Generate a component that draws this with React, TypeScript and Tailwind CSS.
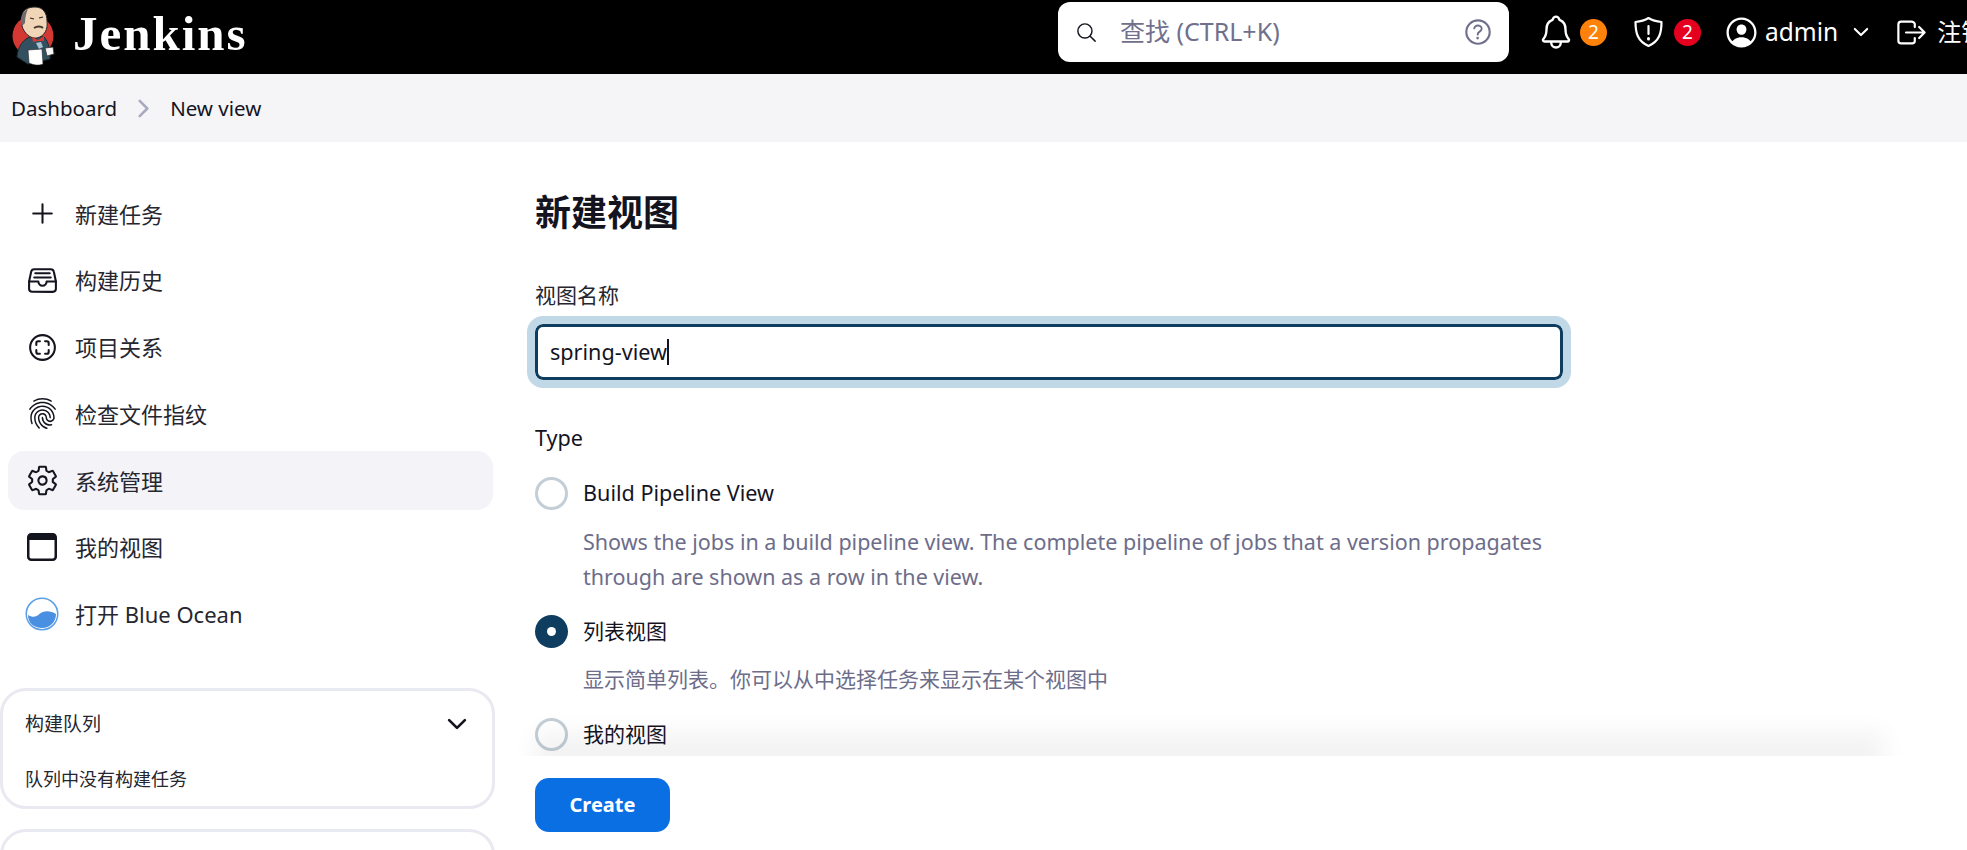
import React from "react";
import {
  IoAdd,
  IoFileTrayFullOutline,
  IoScanCircleOutline,
  IoFingerPrintOutline,
  IoSettingsOutline,
  IoNotificationsOutline,
  IoPersonCircleOutline,
  IoLogOutOutline,
  IoSearchOutline,
  IoHelpCircleOutline,
  IoChevronDown,
  IoChevronForward,
} from "react-icons/io5";

const FONT = "font-['Noto_Sans','Noto_Sans_CJK_SC',sans-serif]";

function Logo() {
  return (
    <svg width="60" height="66" viewBox="0 0 60 66" className="shrink-0">
      <circle cx="23" cy="32" r="20.5" fill="#d33833" />
      <path d="M7 53 C8 42 13 35 22 32 L34 33 C39 38 40 46 40 55 L18 60 Z" fill="#335061" stroke="#1c2b36" strokeWidth="1" />
      <path d="M12 13 C12 6 18 3 25 3 C33 3 37 9 37 17 C38 25 35 32 27 34 C20 35 14 29 12 22 Z" fill="#f0d6b7" stroke="#2a2a2a" strokeWidth="1" />
      <path d="M12 22 C9 15 12 8 18 5 C16 9 15 14 15 19 Z" fill="#6d6b6d" />
      <path d="M24 24 C27 22 31 22 33 24" stroke="#49372c" strokeWidth="2" fill="none" />
      <path d="M20 14 L24 15 M29 14 L33 13" stroke="#2a2a2a" strokeWidth="1.2" />
      <path d="M22 33 L28 36 L34 32 L34 37 L28 37 L23 38 Z" fill="#d33833" />
      <path d="M26 39 L31 38 L33 43 L29 45 Z" fill="#a9c3d2" />
      <path d="M18 46 L32 45 L33 60 C29 62 23 61 19 59 Z" fill="#ffffff" stroke="#222" strokeWidth="0.6" />
      <path d="M35 44 L43 43 L44 50 L37 52 Z" fill="#f5f5f5" stroke="#333" strokeWidth="0.8" />
    </svg>
  );
}

function ShieldIcon() {
  return (
    <svg width="31" height="32" viewBox="0 0 30 32" fill="none" stroke="#fff" strokeWidth="2.2" strokeLinejoin="round" strokeLinecap="round">
      <path d="M15 2 C19 4.5 23 5.5 28 6 C28 17 26 25 15 30 C4 25 2 17 2 6 C7 5.5 11 4.5 15 2 Z" />
      <path d="M15 10 L15 18" />
      <path d="M15 22.5 L15 23" strokeWidth="3" />
    </svg>
  );
}

function WindowIcon() {
  return (
    <svg width="30" height="28" viewBox="0 0 30 28">
      <rect x="1.25" y="1.25" width="27.5" height="25.5" rx="3" fill="none" stroke="#14141f" strokeWidth="2.5" />
      <path d="M1 4 a3 3 0 0 1 3-3 h22 a3 3 0 0 1 3 3 v3 H1 Z" fill="#14141f" />
    </svg>
  );
}

function OceanIcon() {
  return (
    <svg width="34" height="34" viewBox="0 0 34 34">
      <circle cx="17" cy="17" r="15.75" fill="#fff" stroke="#5a9fe6" strokeWidth="1.5" />
      <path d="M3 18 C8 21 11 20 15 16.5 C20 13 26 14 31 17 C31 25 25 31 17 31 C9 31 3 26 3 18 Z" fill="#4a90e2" />
    </svg>
  );
}

function NavItem({ icon, label, active }: { icon: React.ReactNode; label: string; active?: boolean }) {
  return (
    <div className={`h-[59px] mb-[7.8px] flex items-center rounded-[16px] pl-[16px] ${active ? "bg-[#f3f3f8]" : ""}`}>
      <span className="w-[36px] flex items-center justify-center shrink-0 text-[#14141f]">{icon}</span>
      <span className="ml-[15px] text-[22px] leading-none text-[#26262f] whitespace-nowrap">{label}</span>
    </div>
  );
}

function Radio({ checked }: { checked?: boolean }) {
  return checked ? (
    <span className="w-[33px] h-[33px] rounded-full bg-[#0e3d60] flex items-center justify-center shrink-0">
      <span className="w-[9px] h-[9px] rounded-full bg-white" />
    </span>
  ) : (
    <span className="w-[33px] h-[33px] rounded-full border-[3px] border-[#c3ced6] bg-white shrink-0" />
  );
}

export default function App() {
  return (
    <div className={`w-[1967px] h-[850px] overflow-hidden bg-white relative ${FONT}`}>
      {/* Header */}
      <header className="h-[74px] bg-black flex items-center pl-[10px] overflow-hidden">
        <div className="w-[1048px] flex items-center shrink-0">
          <Logo />
          <span className="ml-[3px] font-['Liberation_Serif',serif] font-bold text-[49px] tracking-[2px] text-white leading-none -mt-[8px]">
            Jenkins
          </span>
        </div>
        <div className="w-[451px] h-[60px] -mt-[10px] bg-white rounded-[12px] flex items-center shrink-0 pl-[17px] pr-[14px]">
          <IoSearchOutline size={23} className="text-[#14141f] shrink-0" />
          <span className="ml-[22px] text-[25px] text-[#70708c] whitespace-nowrap">查找 (CTRL+K)</span>
          <IoHelpCircleOutline size={34} className="ml-auto text-[#70708c]" />
        </div>
        <div className="ml-[28px] flex items-center text-white -mt-[10px] shrink-0">
          <IoNotificationsOutline size={38} />
          <span className="ml-[5px] w-[27px] h-[27px] rounded-full bg-[#fe820a] text-[19px] flex items-center justify-center">2</span>
          <span className="ml-[26px]"><ShieldIcon /></span>
          <span className="ml-[10px] w-[27px] h-[27px] rounded-full bg-[#e6001f] text-[19px] flex items-center justify-center">2</span>
          <IoPersonCircleOutline size={37} className="ml-[22px]" />
          <span className="ml-[5px] text-[24.5px] leading-none whitespace-nowrap">admin</span>
          <IoChevronDown size={22} className="ml-[12px]" />
          <IoLogOutOutline size={35} className="ml-[22px]" />
          <span className="ml-[8px] text-[24px] leading-none whitespace-nowrap">注销</span>
        </div>
      </header>

      {/* Breadcrumb */}
      <div className="h-[68px] bg-[#f5f5f8] flex items-center pl-[11px] text-[20.5px] text-[#14141f]">
        <span>Dashboard</span>
        <IoChevronForward size={27} className="ml-[13px] text-[#a8a8c0]" />
        <span className="ml-[13px]">New view</span>
      </div>

      <div className="flex">
        {/* Sidebar */}
        <aside className="w-[501px] pl-[8px] pr-[8px] pt-[42px] shrink-0">
          <NavItem icon={<IoAdd size={33} />} label="新建任务" />
          <NavItem icon={<IoFileTrayFullOutline size={33} />} label="构建历史" />
          <NavItem icon={<IoScanCircleOutline size={33} />} label="项目关系" />
          <NavItem icon={<IoFingerPrintOutline size={33} />} label="检查文件指纹" />
          <NavItem active icon={<IoSettingsOutline size={33} />} label="系统管理" />
          <NavItem icon={<WindowIcon />} label="我的视图" />
          <NavItem icon={<OceanIcon />} label="打开 Blue Ocean" />
          <div className="-ml-[8px] -mr-[2px] mt-[44px] h-[121px] border-[3px] border-[#e9e9f2] rounded-[26px] pl-[22px] pr-[21px] text-[#26262f]">
            <div className="flex items-center justify-between pt-[19px]">
              <span className="text-[19px] leading-[28px]">构建队列</span>
              <IoChevronDown size={28} className="text-[#14141f]" />
            </div>
            <div className="mt-[28px] text-[18px] leading-[26px]">队列中没有构建任务</div>
          </div>
          <div className="-ml-[8px] -mr-[2px] mt-[20px] h-[60px] border-[3px] border-[#e9e9f2] rounded-[26px]" />
        </aside>

        {/* Main */}
        <main className="pl-[34px] w-[1062px] shrink-0 text-[#14141f]">
          <h1 className="mt-[46px] text-[36px] leading-[50px] font-bold">新建视图</h1>
          <label className="block mt-[42px] text-[21px] leading-[30px] text-[#26262f]">视图名称</label>
          <div className="mt-[14px] h-[56px] rounded-[8px] border-[3px] border-[#0e3d60] outline-[8px] outline-[#c1d8e7] flex items-center pl-[12px] text-[21.6px]">
            <span>spring-view</span>
            <span className="w-[2px] h-[26px] bg-[#14141f]" />
          </div>
          <div className="mt-[44px] text-[21.6px] leading-[28px]">Type</div>

          <div className="mt-[25px] flex items-center">
            <Radio />
            <span className="ml-[15px] text-[21.6px]">Build Pipeline View</span>
          </div>
          <p className="mt-[14px] ml-[48px] text-[21.5px] leading-[35px] text-[#6d6d8a]">
            Shows the jobs in a build pipeline view. The complete pipeline of jobs that a version propagates through are shown as a row in the view.
          </p>

          <div className="mt-[21px] flex items-center">
            <Radio checked />
            <span className="ml-[15px] text-[21px]">列表视图</span>
          </div>
          <p className="mt-[16px] ml-[48px] text-[21px] leading-[30px] text-[#6d6d8a]">显示简单列表。你可以从中选择任务来显示在某个视图中</p>

          <div className="mt-[24px] flex items-center">
            <Radio />
            <span className="ml-[15px] text-[21px]">我的视图</span>
          </div>
        </main>
      </div>

      {/* Sticky action bar lying over the form */}
      <div className="absolute left-[510px] top-[756px] w-[1398px] h-[94px] bg-white pl-[25px] pt-[22px] shadow-[0_-48px_24px_-24px_rgba(0,0,0,0.05)]">
        <button className="w-[135px] h-[54px] rounded-[14px] bg-[#0b6fe4] text-white font-bold text-[20px]">Create</button>
      </div>
    </div>
  );
}
